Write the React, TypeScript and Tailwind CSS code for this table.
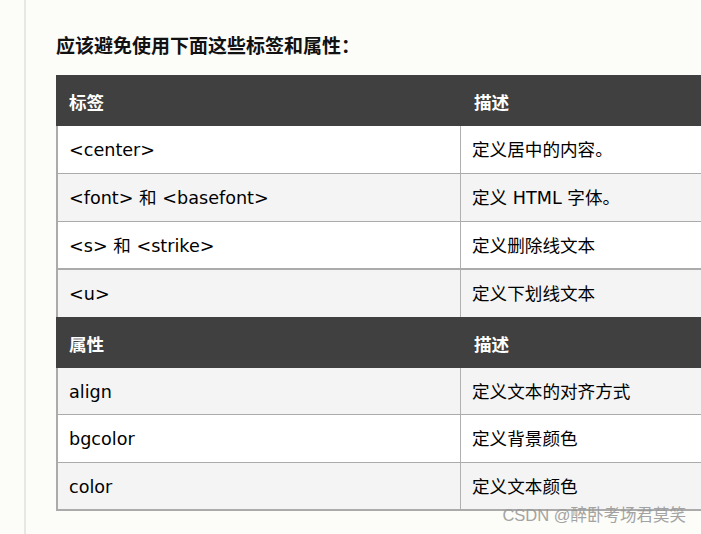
const groups = [
  {
    head: ['标签', '描述'],
    rows: [
      ['<center>', '定义居中的内容。'],
      ['<font> 和 <basefont>', '定义 HTML 字体。'],
      ['<s> 和 <strike>', '定义删除线文本'],
      ['<u>', '定义下划线文本'],
    ],
    start: 'white',
  },
  {
    head: ['属性', '描述'],
    rows: [
      ['align', '定义文本的对齐方式'],
      ['bgcolor', '定义背景颜色'],
      ['color', '定义文本颜色'],
    ],
    start: 'gray',
  },
];

export default function App() {
  return (
    <div
      className="relative w-[701px] h-[534px] overflow-hidden bg-[#fcfcf8] flex"
      style={{ fontFamily: '"DejaVu Sans", "Noto Sans CJK SC", sans-serif' }}
    >
      {/* 左侧边线 */}
      <div className="ml-6 w-[2px] h-full bg-[#e7e7e3] shrink-0" />

      <div className="pl-[30px] shrink-0">
        <h3
          className="mt-[31px] h-[28px] leading-[28px] text-[19px] font-bold text-[#111]"
          style={{ fontFamily: '"Noto Sans CJK SC", sans-serif' }}
        >
          应该避免使用下面这些标签和属性：
        </h3>

        <div className="mt-[16px] w-[820px] text-[17.6px] text-black">
          {groups.map((g, gi) => (
            <div key={gi}>
              {/* 表头 */}
              <div className="flex h-[51px] items-center pt-[3px] bg-[#404040] text-white font-bold">
                <div className="w-[406px] pl-[13px]" style={{ fontFamily: '"Noto Sans CJK SC", sans-serif' }}>
                  {g.head[0]}
                </div>
                <div className="pl-[12px]" style={{ fontFamily: '"Noto Sans CJK SC", sans-serif' }}>
                  {g.head[1]}
                </div>
              </div>
              {g.rows.map((r, ri) => {
                const gray = g.start === 'white' ? ri % 2 === 1 : ri % 2 === 0;
                const last = ri === g.rows.length - 1;
                let border = 'border-b border-[#ababab]';
                if (gi === 0 && ri === 2) border = 'border-b-2 border-[#ababab]';
                if (gi === 0 && last) border = '';
                if (gi === 1 && last) border = 'border-b-2 border-[#ababab]';
                const h = (gi === 1 && ri === 0) || (gi === 0 && last) ? 'h-[47px]' : 'h-[48px]';
                return (
                  <div
                    key={ri}
                    className={`flex box-border border-l-2 border-l-[#ababab] ${h} ${border} ${gray ? 'bg-[#f4f4f4]' : 'bg-white'}`}
                  >
                    <div className="w-[403px] shrink-0 flex items-center pt-[3px] pl-[11px] border-r border-[#b0b0b0] leading-none">
                      {r[0]}
                    </div>
                    <div className="flex items-center pt-[3px] pl-[11px] leading-none">{r[1]}</div>
                  </div>
                );
              })}
            </div>
          ))}
        </div>
      </div>

      {/* 水印 */}
      <div
        className="absolute right-[15px] bottom-[9px] text-[16.5px] leading-[20px] text-[#9a9a9a] opacity-90"
        style={{ fontFamily: '"Liberation Sans", "Noto Sans CJK SC", sans-serif' }}
      >
        CSDN @醉卧考场君莫笑
      </div>
    </div>
  );
}
